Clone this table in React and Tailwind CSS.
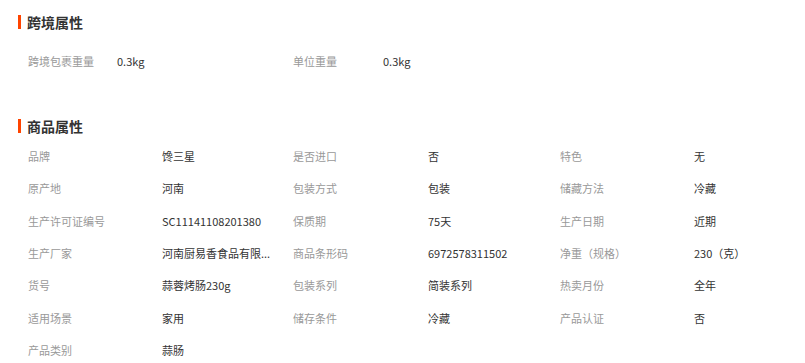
const crossBorder = [
  ["跨境包裹重量", "0.3kg"],
  ["单位重量", "0.3kg"],
];

const attrs = [
  ["品牌", "馋三星"],
  ["是否进口", "否"],
  ["特色", "无"],
  ["原产地", "河南"],
  ["包装方式", "包装"],
  ["储藏方法", "冷藏"],
  ["生产许可证编号", "SC11141108201380"],
  ["保质期", "75天"],
  ["生产日期", "近期"],
  ["生产厂家", "河南厨易香食品有限..."],
  ["商品条形码", "6972578311502"],
  ["净重（规格）", "230（克）"],
  ["货号", "蒜蓉烤肠230g"],
  ["包装系列", "简装系列"],
  ["热卖月份", "全年"],
  ["适用场景", "家用"],
  ["储存条件", "冷藏"],
  ["产品认证", "否"],
  ["产品类别", "蒜肠"],
];

const SectionTitle = ({ children }) => (
  <div className="flex items-center h-5 pl-[18px]">
    <span className="w-[3px] h-[14px] bg-[#ff4400]" />
    <span className="ml-[6px] text-[14px] font-bold text-[#333]">{children}</span>
  </div>
);

export default function App() {
  return (
    <div
      className="w-[805px] h-[363px] bg-white overflow-hidden pt-3 text-[11px]"
      style={{ fontFamily: '"Noto Sans CJK SC", "Noto Sans", sans-serif' }}
    >
      <SectionTitle>跨境属性</SectionTitle>

      {/* Cross-border */}
      <div className="grid grid-cols-[89px_176px_90px_1fr] pl-[28px] mt-[13px] h-8 items-center">
        {crossBorder.map(([k, v]) => (
          <div key={k} className="contents">
            <span className="text-[#999]">{k}</span>
            <span className="text-[#333]">{v}</span>
          </div>
        ))}
      </div>

      <div className="mt-[39px]">
        <SectionTitle>商品属性</SectionTitle>
      </div>

      {/* Product attributes */}
      <div className="grid grid-cols-[134px_131px_135px_132px_134px_1fr] auto-rows-[32.33px] items-center pl-[28px] mt-[4px]">
        {attrs.map(([k, v]) => (
          <div key={k} className="contents">
            <span className="text-[#999] whitespace-nowrap">{k}</span>
            <span className="text-[#333] whitespace-nowrap">{v}</span>
          </div>
        ))}
      </div>
    </div>
  );
}
